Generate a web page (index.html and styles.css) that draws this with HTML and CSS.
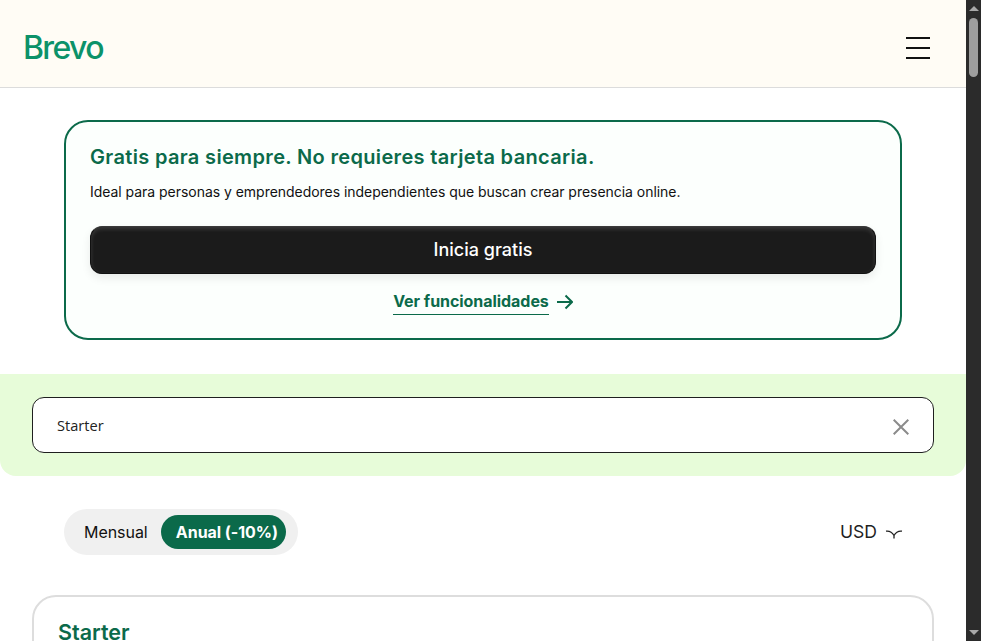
FILE: index.html
```html
<!DOCTYPE html>
<html lang="es">
<head>
<meta charset="utf-8">
<title>Brevo</title>
<link rel="stylesheet" href="styles.css">
</head>
<body>
<div class="page">
  <div class="content">
    <header class="header">
      <a class="logo">Brevo</a>
      <button class="burger" aria-label="Menú"><span></span><span></span><span></span></button>
    </header>
    <main class="main">
      <section class="free">
        <h2 class="free-title">Gratis para siempre. No requieres tarjeta bancaria.</h2>
        <p class="free-text">Ideal para personas y emprendedores independientes que buscan crear presencia online.</p>
        <a class="cta">Inicia gratis</a>
        <div class="more">
          <a class="more-link">Ver funcionalidades</a>
          <svg class="more-arrow" viewBox="0 0 16 16" width="16" height="16"><path d="M0 8H15M8.5 1.5L15 8L8.5 14.5" fill="none" stroke="#0b6a4a" stroke-width="2"/></svg>
        </div>
      </section>
      <section class="band">
        <div class="select">
          <span class="select-text">Starter</span>
          <svg class="select-x" viewBox="0 0 16 16" width="16" height="16"><path d="M.7 .7L15.3 15.3M15.3 .7L.7 15.3" fill="none" stroke="#8b8b8b" stroke-width="2"/></svg>
        </div>
      </section>
      <section class="controls">
        <div class="toggle">
          <span class="toggle-off">Mensual</span>
          <span class="toggle-on">Anual (-10%)</span>
        </div>
        <div class="currency">
          <span>USD</span>
          <svg viewBox="0 0 18 10" width="18" height="10"><path d="M1 2.2C4 1.8 7 3 9 6.5C11 3 14 1.8 17 2.2M9 6.5V9.5" fill="none" stroke="#1f1f1f" stroke-width="1.3"/></svg>
        </div>
      </section>
      <section class="plan">
        <h3 class="plan-title">Starter</h3>
      </section>
    </main>
  </div>
  <aside class="scrollbar">
    <i class="sb-up"></i>
    <i class="sb-thumb"></i>
    <i class="sb-down"></i>
  </aside>
</div>
</body>
</html>
```
FILE: styles.css
```css
* { box-sizing: border-box; }
html, body { margin: 0; height: 641px; overflow: hidden; background: #fff; }
body { font-family: "Inter", "Liberation Sans", sans-serif; color: #111; }
.page { display: flex; width: 981px; height: 641px; }
.content { width: 966px; height: 641px; overflow: hidden; }
.header {
  height: 88px; padding: 8px 36px 0 24px;
  background: #fffcf5; border-bottom: 1px solid #dcdcdc;
  display: flex; align-items: center; justify-content: space-between;
}
.logo { font: 500 32px/1 "Inter", sans-serif; color: #0c9269; letter-spacing: -1.65px; margin: 1px 0 0 -1px; }
.burger { width: 24px; height: 22px; padding: 0; border: 0; background: none; display: flex; flex-direction: column; justify-content: space-between; }
.burger span { display: block; height: 2px; background: #111; }
.main { padding-top: 32px; }
.free {
  width: 838px; height: 220px; margin: 0 0 34px 64px;
  border: 2px solid #0b6a4a; border-radius: 24px; background: #fcfffd;
  padding: 21px 24px 0;
}
.free-title { margin: 0; font: 600 20px/28px "Inter", sans-serif; letter-spacing: .34px; color: #0b6a4a; }
.free-text { margin: 11px 0 0; font: 400 14px/20px "Inter", sans-serif; letter-spacing: -.035px; color: #111; }
.cta {
  display: flex; align-items: center; justify-content: center;
  height: 48px; margin-top: 24px; border-radius: 12px;
  background: #1b1b1b; border: 1px solid #111; border-top-color: #3a3a3a;
  box-shadow: inset 0 2px 4px rgba(255,255,255,.14), 0 4px 10px rgba(0,0,0,.08);
  color: #fff; font: 500 18px/24px "Inter", sans-serif;
}
.more { display: flex; justify-content: center; align-items: flex-start; gap: 8px; margin-top: 15px; }
.more-link { font: 700 16px/24px "Inter", sans-serif; letter-spacing: -.05px; color: #0b6a4a; border-bottom: 1px solid #0b6a4a; padding-bottom: 1px; }
.more-arrow { display: block; margin-top: 5px; }
.band {
  height: 102px; padding: 23px 32px; background: #e7fcd9;
  border-radius: 0 0 16px 16px;
}
.select {
  height: 56px; background: #fff; border: 1px solid #1f1f1f; border-radius: 12px;
  display: flex; align-items: center; justify-content: space-between; padding: 0 24px;
}
.select-text { font: 400 14.6px/20px "Open Sans", sans-serif; color: #222; }
.select-x { display: block; margin-top: 4px; }
.controls {
  display: flex; justify-content: space-between; align-items: center;
  margin-top: 33px; height: 46px; padding: 0 63px 0 64px;
}
.toggle { width: 234px; height: 46px; border-radius: 23px; background: #f0f0f0; display: flex; align-items: center; justify-content: space-between; padding: 0 12px 0 20px; }
.toggle-off { font: 400 16px/24px "Inter", sans-serif; letter-spacing: -.05px; color: #111; }
.toggle-on { height: 34px; padding: 0 8px 0 15px; border-radius: 17px; background: #0b6a4a; color: #fff; font: 700 16px/34px "Inter", sans-serif; letter-spacing: -.05px; }
.currency { display: flex; align-items: center; gap: 8px; font: 400 17.6px/24px "Inter", sans-serif; color: #1f1f1f; }
.currency svg { display: block; margin-top: 3px; }
.plan {
  width: 902px; height: 200px; margin: 40px 0 0 32px;
  border: 2px solid #dddddd; border-radius: 24px; padding: 21px 24px;
}
.plan-title { margin: 0; font: 600 21.5px/28px "Inter", sans-serif; color: #0b6a4a; }
.scrollbar { width: 15px; height: 641px; background: #2b2b2b; display: flex; flex-direction: column; align-items: center; padding: 6px 0; }
.sb-up, .sb-down { display: block; width: 0; height: 0; border-left: 5px solid transparent; border-right: 5px solid transparent; }
.sb-up { border-bottom: 5px solid #a8a8a8; margin-left: 1px; }
.sb-down { border-top: 5px solid #a8a8a8; margin-top: auto; margin-left: 1px; }
.sb-thumb { display: block; width: 9px; height: 59px; margin-top: 7px; border-radius: 5px; background: #9e9e9e; }
```
